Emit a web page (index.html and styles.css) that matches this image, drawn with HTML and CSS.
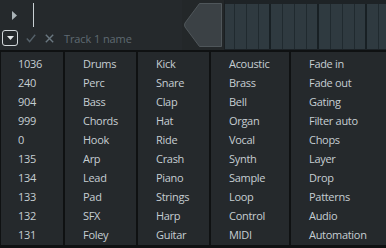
FILE: index.html
```html
<!DOCTYPE html>
<html lang="en">
<head>
  <meta charset="UTF-8" />
  <title>Track names</title>
  <link rel="stylesheet" href="styles.css">
</head>
<body>
  <div class="top">
    <div class="controls">
      <div class="transport">
        <svg class="play" width="6" height="9" viewBox="0 0 6 9"><path d="M0 0 L5 4.5 L0 9 Z"/></svg>
        <span class="caret"></span>
      </div>
      <div class="name-row">
        <button class="menu-btn"><svg width="7" height="4" viewBox="0 0 7 4"><path d="M0 0 H7 L3.5 4 Z"/></svg></button>
        <svg class="tick" width="10" height="9" viewBox="0 0 10 9"><path d="M0.8 4.6 L3.6 7.6 L9.2 0.8"/></svg>
        <svg class="cross" width="9" height="9" viewBox="0 0 9 9"><path d="M0.8 0.8 L8.2 8.2 M8.2 0.8 L0.8 8.2"/></svg>
        <span class="track-name">Track 1 name</span>
      </div>
    </div>
    <div class="clip-handle">
      <svg width="42" height="46" viewBox="0 0 42 46"><path d="M17.5 1.5 H39.5 V44.5 H17.5 L3 25 Q2 23 3 21 Z"/></svg>
    </div>
    <div class="pattern"></div>
  </div>

  <div class="lists">
    <ul class="col">
      <li>1036</li><li>240</li><li>904</li><li>999</li><li>0</li>
      <li>135</li><li>134</li><li>133</li><li>132</li><li>131</li>
    </ul>
    <ul class="col">
      <li>Drums</li><li>Perc</li><li>Bass</li><li>Chords</li><li>Hook</li>
      <li>Arp</li><li>Lead</li><li>Pad</li><li>SFX</li><li>Foley</li>
    </ul>
    <ul class="col">
      <li>Kick</li><li>Snare</li><li>Clap</li><li>Hat</li><li>Ride</li>
      <li>Crash</li><li>Piano</li><li>Strings</li><li>Harp</li><li>Guitar</li>
    </ul>
    <ul class="col">
      <li>Acoustic</li><li>Brass</li><li>Bell</li><li>Organ</li><li>Vocal</li>
      <li>Synth</li><li>Sample</li><li>Loop</li><li>Control</li><li>MIDI</li>
    </ul>
    <ul class="col">
      <li>Fade in</li><li>Fade out</li><li>Gating</li><li>Filter auto</li><li>Chops</li>
      <li>Layer</li><li>Drop</li><li>Patterns</li><li>Audio</li><li>Automation</li>
    </ul>
  </div>
</body>
</html>
```

FILE: styles.css
```css
:root {
  --panel: #25292c;
  --edge: #0f1112;
  --text: #c6ced3;
  --muted: #5f6a72;
}
* {
  box-sizing: border-box;
}
body {
  margin: 0;
  background: var(--edge);
  font-family: 'Open Sans', sans-serif;
  font-size: 11px;
  color: var(--text);
  overflow: hidden;
}
.top {
  display: flex;
  height: 50px;
  background: var(--panel);
}
.controls {
  width: 182px;
  display: flex;
  flex-direction: column;
}
.transport {
  height: 30px;
  display: flex;
  align-items: center;
  padding-left: 12px;
}
.play {
  fill: #aab3b8;
}
.caret {
  width: 1px;
  height: 24px;
  margin-left: 15px;
  background: #c9d0d4;
}
.name-row {
  display: flex;
  align-items: flex-start;
  padding-left: 2px;
}
.menu-btn {
  width: 16px;
  height: 16px;
  padding: 0;
  display: flex;
  align-items: center;
  justify-content: center;
  background: none;
  border: 1.5px solid #d3d8db;
  border-radius: 3px;
}
.menu-btn svg {
  fill: #e4e8ea;
}
.tick,
.cross {
  margin-top: 4px;
  fill: none;
  stroke-width: 1.4;
}
.tick {
  margin-left: 8px;
  stroke: #55616a;
}
.cross {
  margin-left: 9px;
  stroke: #6a7780;
}
.track-name {
  margin-left: 10px;
  line-height: 17px;
  letter-spacing: -0.1px;
  color: var(--muted);
}
.clip-handle {
  width: 42px;
  padding-top: 2px;
  background: #232729;
}
.clip-handle svg {
  fill: #3b4145;
  stroke: #4f565a;
  stroke-width: 1;
}
.pattern {
  flex: 1;
  border-top: 4px solid #1e2326;
  border-left: 1px solid #1a1f22;
  border-bottom: 1px solid #1c2226;
  background-color: #2f3a40;
  background-image:
    repeating-linear-gradient(90deg, transparent 0 44px, #182024 44px 46px, transparent 46px 48px),
    repeating-linear-gradient(90deg, transparent 0 9px, #202a2f 9px 10px, transparent 10px 12px);
}
.lists {
  display: grid;
  grid-template-columns: 62px 71px 71px 78px 1fr;
  gap: 2px;
  height: 198px;
  padding: 2px 0 3px 1px;
}
.col {
  margin: 0;
  padding: 2px 0 0 18px;
  list-style: none;
  background: var(--panel);
  letter-spacing: -0.3px;
}
.col li {
  height: 19px;
  line-height: 19px;
  white-space: nowrap;
}
.col:first-child {
  padding-left: 17px;
}
```
